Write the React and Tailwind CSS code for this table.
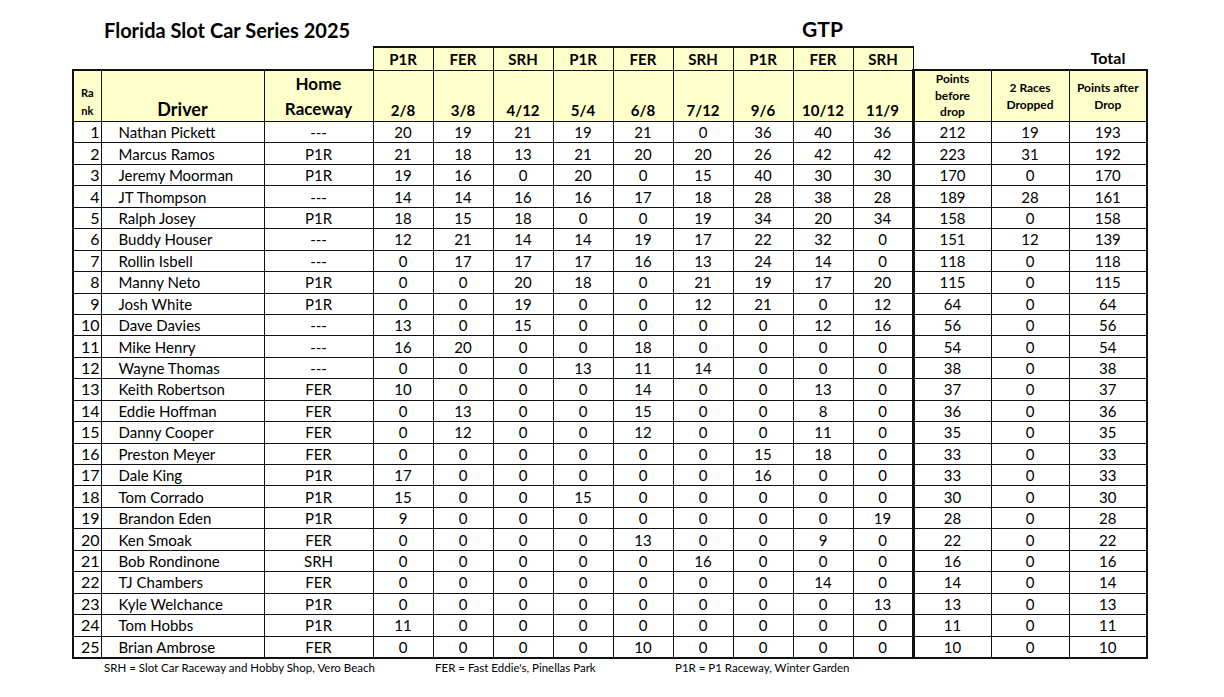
import React from "react";

const races = ["P1R", "FER", "SRH", "P1R", "FER", "SRH", "P1R", "FER", "SRH"];
const dates = ["2/8", "3/8", "4/12", "5/4", "6/8", "7/12", "9/6", "10/12", "11/9"];

const rows = [
  [1, "Nathan Pickett", "---", [20, 19, 21, 19, 21, 0, 36, 40, 36], 212, 19, 193],
  [2, "Marcus Ramos", "P1R", [21, 18, 13, 21, 20, 20, 26, 42, 42], 223, 31, 192],
  [3, "Jeremy Moorman", "P1R", [19, 16, 0, 20, 0, 15, 40, 30, 30], 170, 0, 170],
  [4, "JT Thompson", "---", [14, 14, 16, 16, 17, 18, 28, 38, 28], 189, 28, 161],
  [5, "Ralph Josey", "P1R", [18, 15, 18, 0, 0, 19, 34, 20, 34], 158, 0, 158],
  [6, "Buddy Houser", "---", [12, 21, 14, 14, 19, 17, 22, 32, 0], 151, 12, 139],
  [7, "Rollin Isbell", "---", [0, 17, 17, 17, 16, 13, 24, 14, 0], 118, 0, 118],
  [8, "Manny Neto", "P1R", [0, 0, 20, 18, 0, 21, 19, 17, 20], 115, 0, 115],
  [9, "Josh White", "P1R", [0, 0, 19, 0, 0, 12, 21, 0, 12], 64, 0, 64],
  [10, "Dave Davies", "---", [13, 0, 15, 0, 0, 0, 0, 12, 16], 56, 0, 56],
  [11, "Mike Henry", "---", [16, 20, 0, 0, 18, 0, 0, 0, 0], 54, 0, 54],
  [12, "Wayne Thomas", "---", [0, 0, 0, 13, 11, 14, 0, 0, 0], 38, 0, 38],
  [13, "Keith Robertson", "FER", [10, 0, 0, 0, 14, 0, 0, 13, 0], 37, 0, 37],
  [14, "Eddie Hoffman", "FER", [0, 13, 0, 0, 15, 0, 0, 8, 0], 36, 0, 36],
  [15, "Danny Cooper", "FER", [0, 12, 0, 0, 12, 0, 0, 11, 0], 35, 0, 35],
  [16, "Preston Meyer", "FER", [0, 0, 0, 0, 0, 0, 15, 18, 0], 33, 0, 33],
  [17, "Dale King", "P1R", [17, 0, 0, 0, 0, 0, 16, 0, 0], 33, 0, 33],
  [18, "Tom Corrado", "P1R", [15, 0, 0, 15, 0, 0, 0, 0, 0], 30, 0, 30],
  [19, "Brandon Eden", "P1R", [9, 0, 0, 0, 0, 0, 0, 0, 19], 28, 0, 28],
  [20, "Ken Smoak", "FER", [0, 0, 0, 0, 13, 0, 0, 9, 0], 22, 0, 22],
  [21, "Bob Rondinone", "SRH", [0, 0, 0, 0, 0, 16, 0, 0, 0], 16, 0, 16],
  [22, "TJ Chambers", "FER", [0, 0, 0, 0, 0, 0, 0, 14, 0], 14, 0, 14],
  [23, "Kyle Welchance", "P1R", [0, 0, 0, 0, 0, 0, 0, 0, 13], 13, 0, 13],
  [24, "Tom Hobbs", "P1R", [11, 0, 0, 0, 0, 0, 0, 0, 0], 11, 0, 11],
  [25, "Brian Ambrose", "FER", [0, 0, 0, 0, 10, 0, 0, 0, 0], 10, 0, 10],
];

const font = { fontFamily: "Lato, 'Open Sans', 'Liberation Sans', sans-serif" };

export default function App() {
  const last = rows.length - 1;
  return (
    <div className="w-[1224px] h-[697px] bg-white text-black overflow-hidden" style={font}>
      <div className="grid grid-cols-[661px_179px] pl-[72px] h-[46px] pt-[17px]">
        <div className="pl-[32px] text-[20px] font-bold leading-[26px]">Florida Slot Car Series 2025</div>
        <div className="text-center text-[21px] font-bold leading-[24px]">GTP</div>
      </div>
      <table className="ml-[72px] w-[1074px] table-fixed border-collapse">
        <colgroup>
          <col className="w-[28px]" />
          <col className="w-[163px]" />
          <col className="w-[109px]" />
          {races.map((_, i) => (
            <col key={i} className="w-[60px]" />
          ))}
          <col className="w-[78px]" />
          <col className="w-[78px]" />
          <col className="w-[78px]" />
        </colgroup>
        <tbody>
          <tr className="h-[23px]">
            <td></td>
            <td></td>
            <td></td>
            {races.map((r, i) => (
              <td
                key={i}
                className="border border-[#111] border-t-2 bg-[#ffffcc] text-center text-[15px] font-bold leading-[20px] p-0"
              >
                {r}
              </td>
            ))}
            <td></td>
            <td></td>
            <td className="text-[16px] font-bold text-center align-middle leading-[20px] p-0">Total</td>
          </tr>
          <tr className="h-[51px]">
            <td className="border border-[#111] border-l-2 border-t-2 bg-[#ffffcc] text-[11px] font-bold leading-[18px] text-center align-bottom p-0 pb-[1px]">
              Ra
              <br />
              nk
            </td>
            <td className="border border-[#111] border-t-2 bg-[#ffffcc] text-[18px] font-bold text-center align-bottom p-0 leading-[22px] pb-[1px]">
              Driver
            </td>
            <td className="border border-[#111] border-t-2 bg-[#ffffcc] text-[17px] font-bold text-center align-bottom p-0 leading-[25px]">
              Home
              <br />
              Raceway
            </td>
            {dates.map((d, i) => (
              <td
                key={i}
                className={
                  "border border-[#111] bg-[#ffffcc] text-[15px] font-bold text-center align-bottom p-0 leading-[20px] pb-[1px]" +
                  (i === 8 ? " border-r-[3px]" : "")
                }
              >
                {d}
              </td>
            ))}
            <td className="border border-[#111] border-t-2 bg-[#ffffcc] text-[12px] font-bold text-center align-middle p-0 leading-[16.5px]">
              Points
              <br />
              before
              <br />
              drop
            </td>
            <td className="border border-[#111] border-t-2 bg-[#ffffcc] text-[12px] font-bold text-center align-middle p-0 leading-[17px]">
              2 Races
              <br />
              Dropped
            </td>
            <td className="border border-[#111] border-t-2 border-r-2 bg-[#ffffcc] text-[12px] font-bold text-center align-middle p-0 leading-[17px]">
              Points after
              <br />
              Drop
            </td>
          </tr>
          {rows.map((r, idx) => {
            const bb = idx === last ? " border-b-2" : "";
            return (
              <tr key={r[0]} className="h-[21.45px] text-[15px] leading-[20px]">
                <td className={"border border-[#111] border-l-2 text-right text-[16px] pr-[1px] p-0" + bb}>{r[0]}</td>
                <td className={"border border-[#111] text-left pl-[17px] p-0 whitespace-nowrap" + bb}>{r[1]}</td>
                <td className={"border border-[#111] text-center p-0" + bb}>{r[2]}</td>
                {r[3].map((v, i) => (
                  <td
                    key={i}
                    className={"border border-[#111] text-center p-0" + (i === 8 ? " border-r-[3px]" : "") + bb}
                  >
                    {v}
                  </td>
                ))}
                <td className={"border border-[#111] text-center p-0" + bb}>{r[4]}</td>
                <td className={"border border-[#111] text-center p-0" + bb}>{r[5]}</td>
                <td className={"border border-[#111] border-r-2 text-center p-0" + bb}>{r[6]}</td>
              </tr>
            );
          })}
        </tbody>
      </table>
      <div className="relative h-[30px] text-[11.5px] leading-[16px]">
        <span className="absolute left-[104px] top-[1px]">SRH = Slot Car Raceway and Hobby Shop, Vero Beach</span>
        <span className="absolute left-[435px] top-[1px]">FER = Fast Eddie's, Pinellas Park</span>
        <span className="absolute left-[675px] top-[1px]">P1R = P1 Raceway, Winter Garden</span>
      </div>
    </div>
  );
}
